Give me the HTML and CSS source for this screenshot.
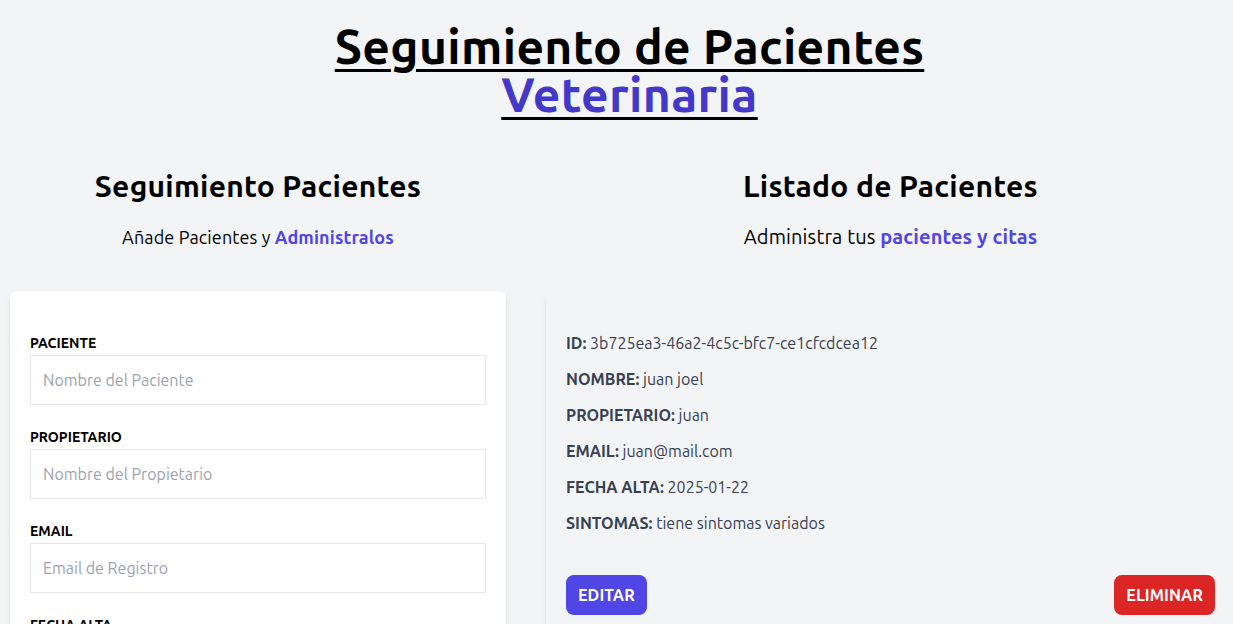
FILE: index.html
```html
<!DOCTYPE html>
<html lang="es">
<head>
<meta charset="utf-8">
<title>Seguimiento de Pacientes Veterinaria</title>
<link rel="stylesheet" href="styles.css">
</head>
<body>
<div class="page">
  <h1 class="title">Seguimiento de Pacientes <span class="title-accent">Veterinaria</span></h1>

  <div class="columns">
    <section class="col">
      <h2 class="col-title">Seguimiento Pacientes</h2>
      <p class="col-sub">Añade Pacientes y <span class="accent">Administralos</span></p>
      <form class="card form-card">
        <div class="field">
          <label class="label" for="mascota">Paciente</label>
          <input class="input" id="mascota" type="text" placeholder="Nombre del Paciente">
        </div>
        <div class="field">
          <label class="label" for="propietario">Propietario</label>
          <input class="input" id="propietario" type="text" placeholder="Nombre del Propietario">
        </div>
        <div class="field">
          <label class="label" for="email">Email</label>
          <input class="input" id="email" type="email" placeholder="Email de Registro">
        </div>
        <div class="field">
          <label class="label" for="alta">Fecha Alta</label>
          <input class="input" id="alta" type="text">
        </div>
      </form>
    </section>

    <section class="col">
      <h2 class="col-title">Listado de Pacientes</h2>
      <p class="col-sub col-sub-lg">Administra tus <span class="accent">pacientes y citas</span></p>
      <div class="card list-card">
        <p class="row"><b>ID:</b> 3b725ea3-46a2-4c5c-bfc7-ce1cfcdcea12</p>
        <p class="row"><b>Nombre:</b> juan joel</p>
        <p class="row"><b>Propietario:</b> juan</p>
        <p class="row"><b>Email:</b> juan@mail.com</p>
        <p class="row"><b>Fecha Alta:</b> 2025-01-22</p>
        <p class="row"><b>Sintomas:</b> tiene sintomas variados</p>
        <div class="actions">
          <button class="btn btn-edit" type="button">Editar</button>
          <button class="btn btn-delete" type="button">Eliminar</button>
        </div>
      </div>
    </section>
  </div>
</div>
</body>
</html>
```

FILE: styles.css
```css
* { box-sizing: border-box; }

html, body {
  margin: 0;
  padding: 0;
  overflow: hidden;
}

body {
  background: #f3f4f6;
  font-family: "Ubuntu", "Roboto", sans-serif;
  color: #000;
}

.page {
  padding-top: 22px;
}

.title {
  margin: 0;
  padding-left: 26px;
  text-align: center;
  font-size: 48px;
  line-height: 48px;
  font-weight: 700;
  letter-spacing: 0.33px;
  text-decoration: underline;
  text-decoration-thickness: 3px;
  text-underline-offset: 5px;
}

.title-accent {
  display: block;
  color: #4338ca;
}

.columns {
  display: grid;
  grid-template-columns: 496px 689px;
  column-gap: 40px;
  padding-left: 10px;
  margin-top: 50px;
}

.col-title {
  margin: 0;
  text-align: center;
  font-size: 30px;
  line-height: 36px;
  font-weight: 700;
  letter-spacing: 0.25px;
}

.col-sub {
  margin: 19px 0 0;
  text-align: center;
  font-size: 18px;
  line-height: 28px;
  letter-spacing: 0.13px;
}

.col-sub-lg {
  font-size: 20px;
}

.accent {
  color: #4f46e5;
  font-weight: 700;
}

.card {
  margin-top: 40px;
  border-radius: 8px;
  padding: 40px 20px;
  box-shadow: 0 4px 6px -1px rgba(0,0,0,0.1), 0 2px 4px -2px rgba(0,0,0,0.1);
}

.form-card {
  background: #fff;
}

.list-card {
  background: #f3f4f6;
  padding-bottom: 20px;
}

.field {
  margin-bottom: 20px;
}

.label {
  display: block;
  padding-top: 1px;
  font-size: 14px;
  line-height: 23px;
  font-weight: 700;
  text-transform: uppercase;
  color: #000;
}

.input {
  display: block;
  width: 100%;
  height: 50px;
  padding: 12px;
  border: 1px solid #e5e7eb;
  background: #fff;
  font-family: inherit;
  font-size: 16px;
  line-height: 24px;
  color: #111827;
  outline: none;
}

.input::placeholder {
  color: #9ca3af;
}

.row {
  margin: 0 0 12px;
  font-size: 16px;
  line-height: 24px;
  color: #374151;
}

.row b {
  text-transform: uppercase;
  font-weight: 700;
}

.actions {
  display: flex;
  justify-content: space-between;
  margin-top: 40px;
}

.btn {
  border: 0;
  border-radius: 8px;
  padding: 8px 12px;
  height: 40px;
  font-family: inherit;
  font-size: 16px;
  line-height: 24px;
  font-weight: 700;
  letter-spacing: 0.1px;
  text-transform: uppercase;
  color: #fff;
}

.btn-edit { background: #4f46e5; }
.btn-delete { background: #dc2626; }
```
